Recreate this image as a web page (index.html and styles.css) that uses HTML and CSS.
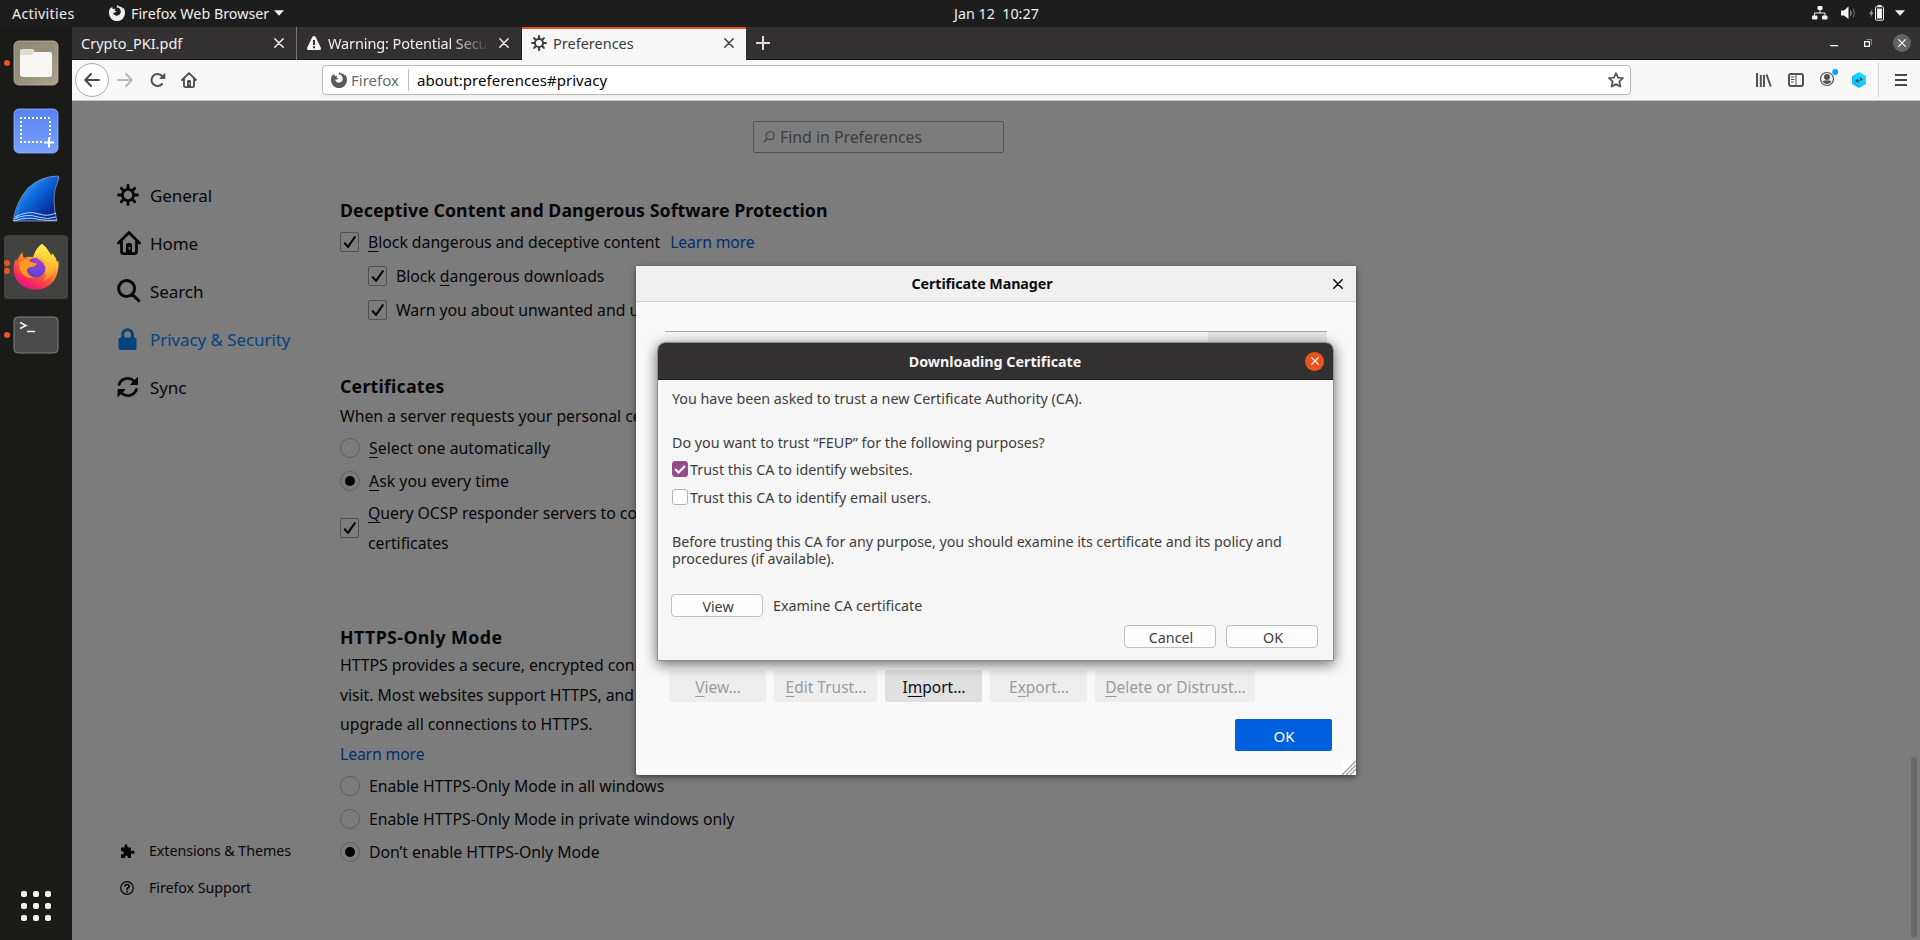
FILE: index.html
```html
<!DOCTYPE html>
<html lang="en">
<head>
<meta charset="utf-8">
<title>Preferences</title>
<link rel="stylesheet" href="styles.css">
</head>
<body>
<svg class="defs" width="0" height="0">
  <defs>
    <symbol id="fx" viewBox="0 0 16 16"><path fill-rule="evenodd" d="M8.700 0C7.900 .7 7.600 1.500 7.800 2.300C9.900 2.500 11.800 4.300 11.800 6.600C11.800 9 10 10.700 7.900 10.700C5.800 10.700 4.300 9.200 4.200 7.500C5 8 6 7.700 6.500 7.100C7 6.900 7.500 6.700 7.400 6.300C7.200 5.800 6 6 5.500 5.400C5.600 4.700 6 4.300 6.500 4C5.500 3.700 4.500 3.900 4 4.300C3.400 3.700 3.300 2.700 3.500 1.800C2.700 2.200 2 2.900 1.600 3.700C1.500 3.300 1.500 2.900 1.500 2.600C.4 4 0 5.800 0 8A8 8 0 0 0 16 8.300C16 5.600 15.200 3.600 13.700 2.300C13.900 2.900 14 3.500 13.900 4C13.300 2.700 12.200 1.800 10.700 1.600C9.700 1.400 9 .8 8.700 0Z"/></symbol>
    <symbol id="gear" viewBox="0 0 22 22"><g fill="none" stroke="currentColor" stroke-linecap="round"><circle cx="11" cy="11" r="5.600" stroke-width="2.700"/><path stroke-width="2.900" d="M11 1.500V4.500M11 17.500V20.500M1.500 11H4.500M17.500 11H20.500M4.300 4.300L6.400 6.400M15.600 15.600L17.700 17.700M4.300 17.700L6.400 15.600M15.600 6.400L17.700 4.300"/></g></symbol>
    <symbol id="home" viewBox="0 0 24 24"><path fill="none" stroke="currentColor" stroke-width="2.800" stroke-linecap="round" stroke-linejoin="round" d="M1.500 12L12 1.600L22.500 12M4.500 11V20.500Q4.500 22.600 6.500 22.600H17.500Q19.500 22.600 19.500 20.500V11"/><path fill-rule="evenodd" fill="currentColor" d="M9 23V14Q9 12 11 12H13Q15 12 15 14V23ZM11.600 16V18.500H13.200V16Z"/></symbol>
    <symbol id="x" viewBox="0 0 10 10"><path fill="none" stroke="currentColor" stroke-width="1.500" stroke-linecap="round" d="M.8 .8L9.200 9.200M9.200 .8L.8 9.200"/></symbol>
    <symbol id="tick" viewBox="0 0 18 18"><path fill="none" stroke="currentColor" stroke-width="2.100" stroke-linecap="round" stroke-linejoin="round" d="M3.800 10.300L7 13.900L13.800 4.200"/></symbol>
    <symbol id="tri" viewBox="0 0 10 6"><path fill="currentColor" d="M0 .3H10L5 5.700Z"/></symbol>
  </defs>
</svg>

<header class="topbar">
  <span class="activities">Activities</span>
  <div class="appmenu"><svg width="16" height="16"><use href="#fx"/></svg><span>Firefox Web Browser</span><svg width="10" height="6"><use href="#tri"/></svg></div>
  <span class="clock">Jan 12&nbsp; 10:27</span>
  <div class="tray">
    <svg width="16" height="14" viewBox="0 0 16 14"><g fill="#f2f2f2"><rect x="5.500" y="0" width="5" height="4" rx="1"/><rect x="0" y="9.500" width="5.500" height="4" rx="1"/><rect x="10" y="9.500" width="5.500" height="4" rx="1"/></g><path d="M8 3.500V7M2.500 10V7H13V10" fill="none" stroke="#f2f2f2"/></svg>
    <svg width="16" height="14" viewBox="0 0 16 14"><path fill="#f2f2f2" d="M0 4.500H3L7.500 .5V13L3 9.500H0Z"/><path fill="none" stroke="#bbb" d="M9.500 4.500Q11 7 9.500 9.500"/><path fill="none" stroke="#777" d="M12 2.500Q15 7 12 11.500"/></svg>
    <svg width="16" height="16" viewBox="0 0 16 16"><path fill="#999" d="M3.500 4L0 9H2L1.500 12.500L4.500 7.500H2.700Z"/><rect x="6.500" y="1.700" width="8" height="13.500" rx="1" fill="none" stroke="#f2f2f2"/><path fill="#f2f2f2" d="M8.500 0H12.500V1.500H8.500ZM8 3.500H13V13.500H8Z"/></svg>
    <svg width="10" height="6"><use href="#tri"/></svg>
  </div>
</header>

<div class="desk">
  <aside class="dock">
    <div class="app"><i class="run"></i>
      <svg width="46" height="46" viewBox="0 0 46 46"><defs><linearGradient id="fg" x1="0" y1="0" x2="1" y2="1"><stop offset="0" stop-color="#8f8872"/><stop offset=".5" stop-color="#979079"/><stop offset="1" stop-color="#aaa48e"/></linearGradient></defs><rect x="1" y="1" width="44" height="44" rx="5" fill="url(#fg)" stroke="#bdb8a5" stroke-width=".8"/><path fill="#dedad0" d="M7 11Q7 9 9 9H19Q21 9 21.500 11L22 13H37V18H7Z"/><path fill="#f8f7f6" d="M7 15H18L22 12H37Q39 12 39 14V34Q39 37 36 37H10Q7 37 7 34Z"/></svg></div>
    <div class="app">
      <svg width="46" height="46" viewBox="0 0 46 46"><defs><linearGradient id="sg" x1="0" y1="0" x2="0" y2="1"><stop offset="0" stop-color="#5583f3"/><stop offset="1" stop-color="#7ba1fb"/></linearGradient></defs><rect x="1" y="1" width="44" height="44" rx="5" fill="url(#sg)" stroke="#9db8fb" stroke-width=".8"/><path fill="none" stroke="#fff" stroke-width="2" stroke-dasharray="2 2" d="M7 10H38M37 13V30M8 13V36M11 34H31"/><path stroke="#fff" stroke-width="2" d="M31 34.500H41M36 29.500V39.500"/></svg></div>
    <div class="app">
      <svg width="48" height="48" viewBox="0 0 48 48"><defs><linearGradient id="wg" x1="0" y1="0" x2="1" y2="1"><stop offset=".2" stop-color="#2a90f0"/><stop offset=".5" stop-color="#0a60d8"/><stop offset=".8" stop-color="#052a90"/></linearGradient></defs><path fill="url(#wg)" stroke="#8a97a8" stroke-width=".8" d="M1 46Q4 27 16 13Q29 1 46 1Q48 2 46 6Q42 14 42 24Q42 36 45 46Z"/><path fill="#2f86ea" d="M3 43Q7 27 18 14Q26 5 36 3Q20 10 12 24Q7 32 5 43Z"/><path fill="none" stroke="#b7d2f7" stroke-width="1" d="M3 42Q16 35 27 39Q36 42 44 38M2 44Q15 38 26 42Q36 45 44 42M2 46Q16 41 27 44.500Q36 46 45 45"/></svg></div>
    <div class="app app-active"><i class="run run-a"></i><i class="run run-b"></i>
      <svg width="46" height="48" viewBox="0 0 46 48"><defs><linearGradient id="ff" x1=".85" y1=".1" x2=".35" y2="1"><stop offset=".05" stop-color="#fff04a"/><stop offset=".35" stop-color="#ffa82e"/><stop offset=".6" stop-color="#ff5f38"/><stop offset=".85" stop-color="#f8295a"/><stop offset="1" stop-color="#e31587"/></linearGradient><radialGradient id="fp" cx=".6" cy=".2" r=".9"><stop offset="0" stop-color="#a63bd9"/><stop offset="1" stop-color="#4a4bc9"/></radialGradient><linearGradient id="fy" x1="0" y1="0" x2="0" y2="1"><stop offset="0" stop-color="#fff04a"/><stop offset=".5" stop-color="#ffc637"/><stop offset="1" stop-color="#ff8a2e"/></linearGradient></defs><path fill="url(#ff)" d="M29 1C33 4 37 8 37 14Q39 13 39 10Q43 14 44 19L45.500 18C46.500 36 37 46.500 23 46.500S.5 37 .5 25Q1 19 3 16L4 18Q6 12 10 9Q9 12 11 15Q15 13 20 14Q23 5 29 1Z"/><path fill="url(#fy)" d="M21 14C22 8 25 3 29 1C33 6 39 10 41 19C43 29 38 36 30 38Q34 33 34 26Q33 17 21 14Z"/><circle cx="23" cy="24.500" r="9.800" fill="url(#fp)"/><path fill="#ffb22e" d="M20 13.500Q31 13 34 22Q35 28 32 32Q34 22 28 18Q25 15 20 13.500Z"/><path fill="#ff9a1f" d="M6 20Q10 16 15 17Q20 21 24 20Q24 23 18 24Q13 25 14 29Q16 33 21 35Q11 36 7 27Z"/></svg></div>
    <div class="app"><i class="run"></i>
      <svg width="46" height="38" viewBox="0 0 46 38"><rect x="1" y="1" width="44" height="36" rx="4" fill="#4a4a4a" stroke="#7f7f7f"/><path fill="none" stroke="#f4f4f4" stroke-width="1.600" d="M7 6.500L13 9.500L7 12.500M14 15.500H22"/></svg></div>
    <div class="grid9"><i></i><i></i><i></i><i></i><i></i><i></i><i></i><i></i><i></i></div>
  </aside>

  <section class="browser">
    <div class="tabs">
      <div class="tab"><span class="tname">Crypto_PKI.pdf</span><svg width="10" height="10"><use href="#x"/></svg></div>
      <div class="tab tab-b"><svg class="fav" width="14" height="14" viewBox="0 0 14 14"><path fill="#f5f5f5" d="M7 0Q8.200 0 8.700 1L13.700 11.500Q14.500 13.800 12.500 14H1.500Q-.5 13.800 .3 11.500L5.300 1Q5.800 0 7 0Z"/><path fill="#333031" d="M6 4H8V9H6ZM6 10.200H8V12.200H6Z"/></svg><span class="tname fade">Warning: Potential Secur</span><svg width="10" height="10"><use href="#x"/></svg></div>
      <div class="tab tab-on"><svg class="fav" width="16" height="16"><use href="#gear"/></svg><span class="tname">Preferences</span><svg width="10" height="10"><use href="#x"/></svg></div>
      <svg class="plus" width="14" height="14" viewBox="0 0 14 14"><path stroke="#ddd" stroke-width="2" d="M0 7H14M7 0V14"/></svg>
      <div class="winctl">
        <svg width="8" height="2"><rect width="8" height="1.300" fill="#fff"/></svg>
        <svg width="8" height="8" viewBox="0 0 8 8"><path fill="none" stroke="#fff" stroke-width="1.200" d="M.6 2.600H5.400V7.400H.6Z"/><path fill="none" stroke="#888" d="M2.500 .5H7.500V6"/></svg>
        <span class="wclose"><svg width="8" height="8"><use href="#x"/></svg></span>
      </div>
    </div>

    <div class="toolbar">
      <span class="back"><svg width="16" height="14" viewBox="0 0 16 14"><path fill="none" stroke="#4a4a4a" stroke-width="2" stroke-linecap="round" stroke-linejoin="round" d="M15 7H1.500M7 1L1.200 7L7 13"/></svg></span>
      <svg class="fwd" width="16" height="14" viewBox="0 0 16 14"><path fill="none" stroke="#b9b9b9" stroke-width="2" stroke-linecap="round" stroke-linejoin="round" d="M1 7H14.500M9 1L14.800 7L9 13"/></svg>
      <svg class="reload" width="16" height="16" viewBox="0 0 16 16"><path fill="none" stroke="#4f4f4f" stroke-width="2" stroke-linecap="round" d="M12 12A6 6 0 1 1 12 4"/><path fill="#4f4f4f" d="M15.300 .8V7H9Z"/></svg>
      <svg class="thome" width="16" height="16"><use href="#home"/></svg>
      <div class="url">
        <svg width="16" height="16"><use href="#fx"/></svg><span class="ident">Firefox</span><i class="vsep"></i><span class="addr">about:preferences#privacy</span>
        <svg class="star" width="16" height="16" viewBox="0 0 16 16"><path fill="none" stroke="#5b5b5b" stroke-width="1.800" stroke-linejoin="round" d="M8 1.200L10 5.600L15 6.200L11.300 9.500L12.400 14.600L8 12.100L3.600 14.600L4.700 9.500L1 6.200L6 5.600Z"/></svg>
      </div>
      <div class="tools">
        <svg width="16" height="14" viewBox="0 0 16 14"><path fill="none" stroke="#525252" stroke-width="2" d="M1 0V14M4.800 2V14M8 2V14M10.500 1.500L14.800 13.500"/></svg>
        <svg width="16" height="14" viewBox="0 0 16 14"><rect x="1" y="1" width="14" height="12" rx="2" fill="none" stroke="#525252" stroke-width="2"/><path stroke="#525252" d="M8 1V13M3 4H6.500M3 6.500H6.500M3 9H5.500"/></svg>
        <svg width="19" height="18" viewBox="0 0 19 18"><circle cx="7" cy="10" r="6.500" fill="none" stroke="#525252" stroke-width="1.200"/><circle cx="7" cy="8" r="3" fill="#525252"/><path fill="#525252" d="M2.500 12Q7 10.500 11.500 12Q10 15 7 15T2.500 12Z"/><circle cx="15.200" cy="3" r="3" fill="#0aa6fb"/></svg>
        <svg width="14" height="16" viewBox="0 0 14 16"><defs><linearGradient id="hx" x1="1" y1="0" x2="0" y2="1"><stop offset="0" stop-color="#12f0ff"/><stop offset="1" stop-color="#18a8ff"/></linearGradient></defs><path fill="url(#hx)" d="M7 0L14 4V12L7 16L0 12V4Z"/><path fill="#44506a" d="M3 9L6 6.500V8H8V5L11 7.200L8.500 9.300V8.500H6.500V11Z"/></svg>
        <i class="tsep"></i>
        <svg width="12" height="12" viewBox="0 0 12 12"><path stroke="#474747" stroke-width="2" d="M0 1H12M0 6H12M0 11H12"/></svg>
      </div>
    </div>

    <div class="page">
      <nav class="nav">
        <a><svg width="22" height="22"><use href="#gear"/></svg><span>General</span></a>
        <a><svg width="24" height="24"><use href="#home"/></svg><span>Home</span></a>
        <a><svg width="24" height="24" viewBox="0 0 24 24"><path fill="none" stroke="currentColor" stroke-width="3" stroke-linecap="round" d="M15.500 15.500L21.800 21.800M17.600 9.500A8 8 0 1 1 1.600 9.500A8 8 0 1 1 17.600 9.500"/></svg><span>Search</span></a>
        <a class="sel"><svg width="22" height="22" viewBox="0 0 22 22"><path fill="none" stroke="currentColor" stroke-width="3" d="M5.800 11V6.500A4.800 4.800 0 0 1 15.400 6.500V11"/><rect x="1.500" y="9.500" width="18" height="12.500" rx="2" fill="currentColor"/></svg><span>Privacy &amp; Security</span></a>
        <a><svg width="22" height="22" viewBox="0 0 22 22"><path fill="none" stroke="currentColor" stroke-width="2.800" stroke-linecap="round" d="M2 8.500A9.200 9.200 0 0 1 17 5M19.500 13.500A9.200 9.200 0 0 1 4.500 17"/><path fill="currentColor" stroke="currentColor" stroke-linejoin="round" d="M20.500 1.500V8.500H13.500ZM1 20.500V13.500H8Z"/></svg><span>Sync</span></a>
        <div class="navfoot">
          <a><svg width="15" height="14" viewBox="0 0 15 14"><path fill="currentColor" d="M4 3.500Q4.800 3.300 4.500 2.200Q4.500 .2 6 .2T7.500 2.200Q7.300 3.300 8.200 3.500H11V6.500Q11.300 7.200 12.300 6.800Q14.800 6.500 14.800 8.200T12.300 9.800Q11.300 9.300 11 10V14H8Q8.300 11.500 6.500 11.500T5 14H1V10.500Q3.800 10.700 3.800 8.800T1 7V3.500Z"/></svg><span>Extensions &amp; Themes</span></a>
          <a><svg width="14" height="14" viewBox="0 0 14 14"><circle cx="7" cy="7" r="6.300" fill="none" stroke="currentColor" stroke-width="1.200"/><path fill="none" stroke="currentColor" stroke-width="1.700" d="M4.900 5.500Q5 3.500 7 3.500T9.100 5.300Q9 6.300 7.800 7Q7 7.500 7 8.800M7 9.800V11.400"/></svg><span>Firefox Support</span></a>
        </div>
      </nav>

      <main class="prefs">
        <div class="find"><svg width="12" height="12" viewBox="0 0 12 12"><circle cx="7.200" cy="4.700" r="4" fill="none" stroke="#3c3c3c" stroke-width="1.100"/><path stroke="#3c3c3c" stroke-width="1.300" d="M4.300 7.700L.6 11.400"/></svg><span>Find in Preferences</span></div>

        <h2 class="h-dec">Deceptive Content and Dangerous Software Protection</h2>
        <div class="row"><i class="box"><svg width="18" height="18"><use href="#tick"/></svg></i><span><u>B</u>lock dangerous and deceptive content</span><a class="link">Learn more</a></div>
        <div class="row sub"><i class="box"><svg width="18" height="18"><use href="#tick"/></svg></i><span>Block <u>d</u>angerous downloads</span></div>
        <div class="row sub"><i class="box"><svg width="18" height="18"><use href="#tick"/></svg></i><span>Warn you about unwanted and uncommon software</span></div>

        <h2 class="h-cert">Certificates</h2>
        <p class="cert">When a server requests your personal certificate</p>
        <div class="row radio"><i class="dot"></i><span class="wide"><u>S</u>elect one automatically</span></div>
        <div class="row radio"><i class="dot on"></i><span class="wide"><u>A</u>sk you every time</span></div>
        <div class="row ocsp"><i class="box"><svg width="18" height="18"><use href="#tick"/></svg></i><span><u>Q</u>uery OCSP responder servers to confirm<br>certificates</span></div>

        <h2 class="h-https">HTTPS-Only Mode</h2>
        <p class="https">HTTPS provides a secure, encrypted conn<br>visit. Most websites support HTTPS, and<br>upgrade all connections to HTTPS.<br><a class="plink">Learn more</a></p>
        <div class="row radio"><i class="dot"></i><span>Enable HTTPS-Only Mode in all windows</span></div>
        <div class="row radio"><i class="dot"></i><span>Enable HTTPS-Only Mode in private windows only</span></div>
        <div class="row radio"><i class="dot on"></i><span>Don’t enable HTTPS-Only Mode</span></div>
      </main>
      <i class="scroll"></i>
    </div>
  </section>
</div>

<section class="manager">
  <header class="mhead"><b>Certificate Manager</b><svg width="10" height="10"><use href="#x"/></svg></header>
  <div class="mtree"><i></i></div>
  <div class="mbtns">
    <span class="mb w97"><u>V</u>iew…</span><span class="mb w103"><u>E</u>dit Trust…</span><span class="mb w97 live">I<u>m</u>port…</span><span class="mb w97">E<u>x</u>port…</span><span class="mb w160"><u>D</u>elete or Distrust…</span>
  </div>
  <div class="mok"><span>OK</span></div>
  <svg class="grip" width="15" height="15" viewBox="0 0 15 15"><rect width="15" height="15" fill="#fff"/><path stroke="#a0a0a0" stroke-width="1.300" d="M1 15L15 1M5 15L15 5M9 15L15 9"/></svg>
</section>

<section class="download">
  <header class="dhead"><b>Downloading Certificate</b><span class="dclose"><svg width="8" height="8"><use href="#x"/></svg></span></header>
  <div class="dbody">
    <p class="d1">You have been asked to trust a new Certificate Authority (CA).</p>
    <p class="d2">Do you want to trust “FEUP” for the following purposes?</p>
    <div class="drow"><i class="dbox checked"><svg width="14" height="14" viewBox="0 0 14 14"><path fill="none" stroke="#fff" stroke-width="2" d="M2 7L5.500 10.500L12 4"/></svg></i><span class="d3">Trust this CA to identify websites.</span></div>
    <div class="drow"><i class="dbox"></i><span class="d3">Trust this CA to identify email users.</span></div>
    <p class="d4">Before trusting this CA for any purpose, you should examine its certificate and its policy and<br>procedures (if available).</p>
    <div class="dview"><span class="db">View</span><span class="d5">Examine CA certificate</span></div>
    <div class="dact"><span class="db">Cancel</span><span class="db">OK</span></div>
  </div>
</section>
</body>
</html>
```
FILE: styles.css
```css
* { box-sizing: border-box; }
body {
  margin: 0;
  width: 1920px;
  height: 940px;
  overflow: hidden;
  position: relative;
  font-family: "Noto Sans", "Open Sans", sans-serif;
  font-size: 14.300px;
  letter-spacing: 0;
  display: flex;
  flex-direction: column;
  background: #1d1d1d;
}
svg { display: block; flex: none; }
.defs { position: absolute; }
span, b, p, h2, a { white-space: nowrap; }
p, h2 { margin: 0; }
u { text-decoration-thickness: 1px; text-underline-offset: 3px; }

/* system bar */
.topbar {
  height: 27px;
  flex: none;
  display: grid;
  grid-template-columns: 97px 845px 1fr auto;
  align-items: center;
  padding: 0 15px 1px 12px;
  color: #f0f0f0;
  background: #1d1d1d;
}
.activities { letter-spacing: 0.3px; }
.appmenu { display: flex; align-items: center; gap: 6px; fill: #f0f0f0; }
.appmenu svg:last-child { margin-left: -1px; }
.tray { display: flex; align-items: center; gap: 12px; }
.tray svg:nth-child(2) { margin-left: 1px; }
.tray svg:last-child { margin-left: -2px; }

.desk { flex: 1; display: flex; min-height: 0; }

/* dock */
.dock {
  width: 72px;
  background: #1a1a18;
  display: flex;
  flex-direction: column;
  align-items: center;
  padding-top: 4px;
}
.app {
  position: relative;
  width: 64px;
  height: 64px;
  margin-bottom: 4px;
  border-radius: 4px;
  display: flex;
  align-items: center;
  justify-content: center;
}
.app-active { background: #424241; }
.run {
  position: absolute;
  left: 0;
  top: 29px;
  width: 6px;
  height: 6px;
  border-radius: 3px;
  background: #e95420;
}
.run-a { top: 25px; }
.run-b { top: 33px; }
.grid9 {
  margin-top: auto;
  margin-bottom: 19px;
  display: grid;
  grid-template-columns: repeat(3, 6px);
  gap: 6px;
}
.grid9 i { width: 6px; height: 6px; border-radius: 2px; background: #f2f2f2; }

/* browser chrome */
.browser { flex: 1; display: flex; flex-direction: column; min-width: 0; }
.tabs {
  height: 33px;
  flex: none;
  display: flex;
  align-items: center;
  background: #333031;
  border-bottom: 1px solid #161616;
  color: #f0f0f0;
  font-size: 14.500px;
}
.tab {
  width: 225px;
  height: 33px;
  display: flex;
  align-items: center;
  padding: 0 12px 0 9px;
  border-right: 1px solid #777;
}
.tab .tname { flex: 1; }
.tab-b { border-right-color: #222; padding-left: 10px; }
.tab-b .fav { margin-right: 7px; }
.tab .fade {
  letter-spacing: -0.120px;
  margin-right: 6px;
  -webkit-mask-image: linear-gradient(90deg, #000 75%, transparent 98%);
  mask-image: linear-gradient(90deg, #000 75%, transparent 98%);
}
.tab-on {
  background: #f7f7f7;
  color: #3d3d3d;
  border-right: 0;
  border-top: 2px solid #e95420;
  padding-bottom: 2px;
  width: 224px;
}
.tab-on .fav { margin-right: 6px; }
.plus { margin-left: 10px; }
.winctl { margin-left: auto; margin-right: 9px; display: flex; align-items: center; gap: 26px; color: #fff; }
.winctl > svg:first-child { margin-top: 5px; }
.winctl > svg:nth-child(2) { margin-right: -5px; }
.wclose { width: 18px; height: 18px; border-radius: 9px; background: #636363; display: grid; place-items: center; }

.toolbar {
  height: 41px;
  flex: none;
  display: flex;
  align-items: center;
  padding: 0 13px 0 3px;
  background: #f8f8f8;
  border-bottom: 1px solid #c4c4c4;
}
.back { width: 34px; height: 34px; border-radius: 17px; border: 1px solid #ababab; background: #fff; display: grid; place-items: center; }
.fwd { margin-left: 8px; }
.reload { margin-left: 17px; }
.thome { margin-left: 15px; color: #4f4f4f; }
.url {
  margin-left: 125px;
  width: 1309px;
  height: 30px;
  display: flex;
  align-items: center;
  border: 1px solid #bdbdbd;
  border-radius: 4px;
  background: #fff;
  padding: 0 6px 0 8px;
  fill: #5b5b5b;
  font-size: 15px;
  box-shadow: 0 1px 3px #0001;
}
.ident { margin-left: 4px; width: 57px; color: #6a6a6a; }
.vsep { width: 1px; height: 22px; background: #c0c0c0; }
.addr { margin-left: 8px; color: #080808; letter-spacing: 0.050px; }
.star { margin-left: auto; }
.tools { margin-left: auto; display: flex; align-items: center; gap: 16px; }
.tools svg:nth-child(3) { margin-bottom: 4px; margin-right: -3px; }
.tsep { width: 1px; height: 34px; background: #d4d4d4; margin-left: -4px; }

/* preferences page */
.page { flex: 1; position: relative; display: flex; background: #7c7c7c; color: #070707; font-size: 15.800px; letter-spacing: -0.030px; min-height: 0; }
.nav { width: 268px; display: flex; flex-direction: column; padding: 70.500px 0 34px 45px; font-size: 17px; letter-spacing: -0.080px; }
.nav a { height: 48px; display: flex; align-items: center; }
.nav a > svg { margin-right: auto; }
.nav > a > svg { margin-top: -1px; }
.nav > a > span { width: 190px; }
.nav .sel { color: #05427f; }
.navfoot { margin-top: auto; font-size: 14.300px; padding-left: 3px; }
.navfoot a { height: 37px; }
.navfoot span { width: 191px; }
.prefs { width: 664px; padding-top: 20px; display: flex; flex-direction: column; }
.find {
  align-self: flex-end;
  width: 251px;
  height: 32px;
  border: 1px solid #535353;
  border-radius: 2px;
  display: flex;
  align-items: center;
  gap: 5px;
  padding-left: 9px;
  color: #3c3c3c;
  font-size: 15.900px;
}
h2 { height: 28px; line-height: 29px; font-size: 17.800px; font-weight: 700; letter-spacing: 0.040px; }
.h-dec { margin: 43px 0 1px; }
.h-cert { margin: 45px 0 1px; letter-spacing: 0.200px; }
.h-https { margin-top: 65px; letter-spacing: 0.400px; }
.row { height: 34px; display: flex; align-items: center; }
.sub { padding-left: 28px; }
.wide { letter-spacing: 0.030px; }
.box { width: 19px; height: 20px; border: 1px solid #505050; border-radius: 2px; margin-right: 9px; }
.link { margin-left: 10px; color: #003070; letter-spacing: -0.150px; }
.plink { color: #003070; letter-spacing: -0.150px; }
.cert { height: 30px; line-height: 31px; }
.radio { height: 33px; }
.dot { width: 20px; height: 20px; border: 1px solid #606060; border-radius: 50%; margin-right: 9px; display: grid; place-items: center; }
.on::after { content: ""; width: 10px; height: 10px; border-radius: 50%; background: #000; }
.ocsp { height: 60px; line-height: 30px; margin-top: 1px; }
.https { line-height: 29.500px; height: 118px; }
.scroll { position: absolute; right: 3px; bottom: 3px; width: 6px; height: 180px; border-radius: 3px; background: #696969; }

/* certificate manager */
.manager {
  position: absolute;
  left: 636px;
  top: 266px;
  width: 720px;
  height: 509px;
  background: #f9f9fa;
  border-radius: 2px;
  box-shadow: 0 2px 6px #0008;
  display: flex;
  flex-direction: column;
}
.mhead {
  height: 36px;
  background: #f0f0f0;
  border-bottom: 1px solid #cfcfcf;
  display: flex;
  align-items: center;
  padding-right: 13px;
  color: #0c0c0d;
}
.mhead b { flex: 1; text-align: center; padding-right: 5px; letter-spacing: -0.080px; }
.mtree { margin: 29px 29px 0; border-top: 1px solid #a6a8ab; height: 339px; display: flex; justify-content: flex-end; }
.mtree i { width: 119px; height: 30px; background: #e6e6e9; }
.mbtns { display: flex; gap: 8px; padding-left: 33px; }
.mb { height: 32px; background: #eeeeee; color: #9b9b9b; border-radius: 2px; text-align: center; line-height: 34px; font-size: 15.500px; padding-left: 1px; }
.w97 { width: 97px; }
.w103 { width: 103px; }
.w160 { width: 160px; }
.live { background: #e0e0e1; color: #0c0c0d; }
.mok { display: flex; justify-content: flex-end; padding: 17px 24px 0; font-size: 15px; }
.mok span { width: 97px; height: 32px; border-radius: 2px; background: #0060df; color: #fff; text-align: center; line-height: 34px; padding-left: 1px; }
.grip { position: absolute; right: 0; bottom: 0; }

/* download prompt */
.download {
  position: absolute;
  left: 657px;
  top: 342px;
  width: 677px;
  height: 319px;
  border: 1px solid #8e8e8e;
  border-radius: 8px 8px 0 0;
  background: #f6f6f6;
  color: #3d3d3d;
  letter-spacing: -0.010px;
  box-shadow: 0 3px 14px #0009;
}
.dhead {
  height: 37px;
  border-radius: 7px 7px 0 0;
  background: #333031;
  border-bottom: 1px solid #1c1c1c;
  color: #f4f4f4;
  display: flex;
  align-items: center;
  padding: 0 9px 0 27px;
}
.dhead b { flex: 1; text-align: center; }
.dclose { width: 19px; height: 19px; border-radius: 50%; background: #e95420; color: #fff; display: grid; place-items: center; }
.dbody { padding: 10px 15px 0 14px; }
.dbody p { line-height: 17px; }
.d2 { margin-top: 27px; margin-bottom: 4px; }
.drow { height: 28px; display: flex; align-items: center; }
.d3 { letter-spacing: 0.020px; }
.dbox { width: 16px; height: 16px; border: 1px solid #b4b4b4; border-radius: 3px; background: #fff; margin-right: 2px; }
.checked { background: #924d8b; border-color: #924d8b; }
.dbody .d4 { margin-top: 22px; letter-spacing: -0.060px; }
.dview { margin: 27px 0 0 -1px; display: flex; align-items: center; gap: 10px; }
.db { width: 92px; height: 23px; border: 1px solid #c0c0c0; border-radius: 4px; background: #fdfdfd; text-align: center; line-height: 23px; padding-left: 2px; }
.dact { margin-top: 8px; display: flex; justify-content: flex-end; gap: 10px; }
```
